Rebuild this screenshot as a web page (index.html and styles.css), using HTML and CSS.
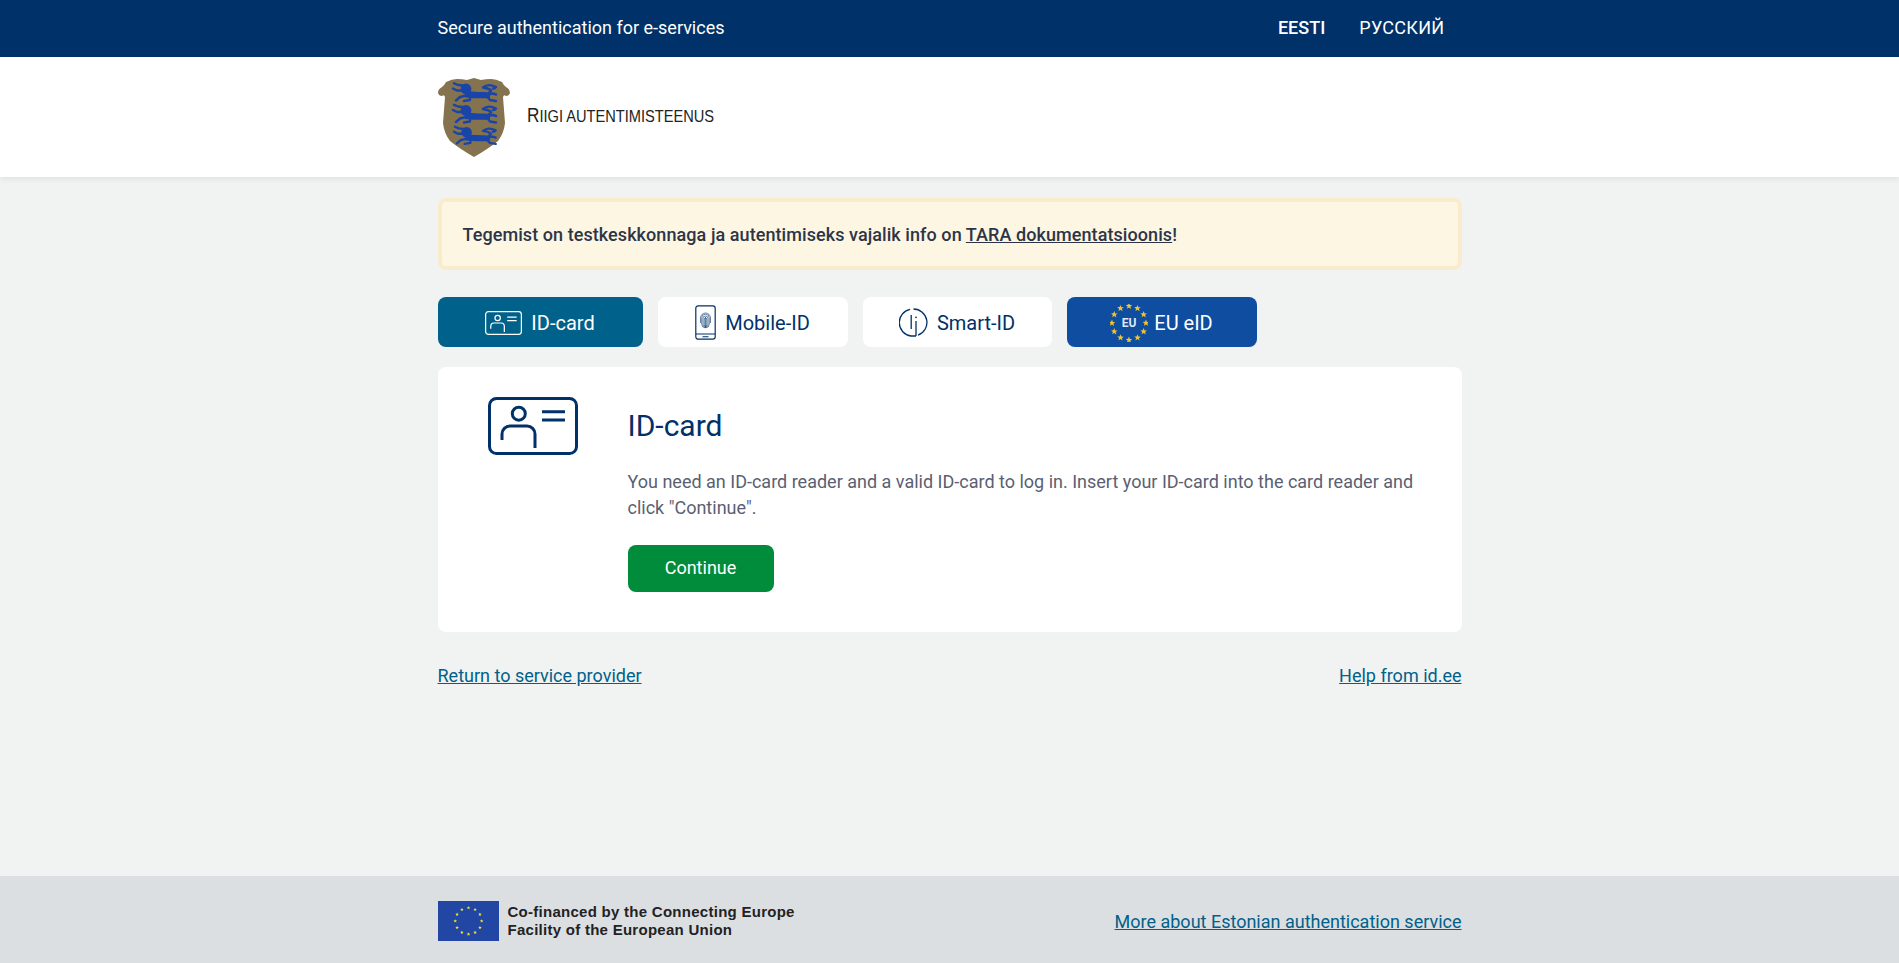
FILE: index.html
```html
<!DOCTYPE html>
<html lang="en">
<head>
  <meta charset="utf-8" />
  <title>Secure authentication for e-services</title>
  <link rel="stylesheet" href="styles.css">
</head>
<body>

<svg class="defs" width="0" height="0">
  <defs>
    <g id="lion" fill="none" stroke="#1a45a8" stroke-linecap="round" stroke-linejoin="round">
      <circle cx="14" cy="6.5" r="5.4" fill="#1a45a8" stroke="none"/>
      <path d="M13 8C22 10 30 9 38 10L38 15.5C28 16 22 16 13 15Z" fill="#1a45a8" stroke="none"/>
      <path stroke-width="2.4" d="M11 3L6 2.5 2 .8M10 8L5 8 1 6M14 13L8 14.5 4 18"/>
      <path stroke-width="2.4" d="M18 14L18 17.5 12 18.5"/>
      <path stroke-width="2.4" d="M37 10C42 8 37 6 31 5 35 1.5 40 2.5 44 4.5 43 6 42 6 41 6"/>
      <path stroke-width="2.4" d="M35 12L41 11 44 12M35 14L38 17.5 44 18.5"/>
    </g>
    <path id="star" d="M0-3.4l.9 2.3 2.4.1-1.9 1.5.7 2.4L0 1.4l-2.1 1.4.7-2.4-1.9-1.5 2.4-.1z"/>
    <g id="card-icon">
      <rect x="1.5" y="1.5" width="87" height="55" rx="7"/>
      <circle cx="30.8" cy="16.7" r="6.5"/>
      <path d="M14 43v-6a8 8 0 0 1 8-8h17a8 8 0 0 1 8 8v14"/>
      <path d="M54 14.7h23M54 23h23"/>
    </g>
  </defs>
</svg>

<div class="topbar">
  <div class="wrap topbar-row">
    <span>Secure authentication for e-services</span>
    <nav class="langs">
      <a href="#" class="lang active">EESTI</a>
      <a href="#" class="lang">РУССКИЙ</a>
    </nav>
  </div>
</div>

<header class="masthead">
  <div class="wrap masthead-row">
    <svg class="crest" viewBox="0 0 72 80">
      <path fill="#85724f" d="M8 5Q14 2 19 2 24 2 29 3L36 1 43 3Q48 2 53 2 58 2 64 5 66 9 68 10 72 12 72 16 71 19 68 19 66 17 65 20L67 46Q66 56 60 64 50 72 36 80 22 72 12 64 6 56 5 46L7 20Q6 17 4 19 1 19 0 16 0 12 4 10 6 9 8 5Z"/>
      <use href="#lion" transform="translate(14 5.5)"/>
      <use href="#lion" transform="translate(14 27)"/>
      <use href="#lion" transform="translate(15 49) scale(.97)"/>
    </svg>
    <span class="sitename">Riigi autentimisteenus</span>
  </div>
</header>

<main class="wrap">
  <div class="notice">
    <span>Tegemist on testkeskkonnaga ja autentimiseks vajalik info on <a href="#">TARA dokumentatsioonis</a>!</span>
  </div>

  <ul class="tabs">
    <li class="tab tab-idcard current">
      <svg class="tab-icon" width="37" height="24" viewBox="0 0 90 58" fill="none" stroke="#fff" stroke-width="3"><use href="#card-icon"/></svg>
      ID-card
    </li>
    <li class="tab tab-mobile">
      <svg class="tab-icon" width="21" height="35" viewBox="0 0 21 35" fill="none" stroke="#003168" stroke-width="1.1">
        <rect x=".8" y=".8" width="19.4" height="33.4" rx="2.4" stroke-width="1.2"/>
        <path d="M1 29h19M7.5 31.7h6"/>
        <g stroke-width=".6">
          <path d="M5.5 13a5 5 0 0 1 10 0v5M5.5 13v5"/>
          <path d="M6.7 13a3.8 3.8 0 0 1 7.6 0v6a3.8 3.8 0 0 1-7.6 0z"/>
          <path d="M8 13.5a2.5 2.5 0 0 1 5 0v6a2.5 2.5 0 0 1-5 0z"/>
          <path d="M9.3 14a1.2 1.2 0 0 1 2.4 0v6a1.2 1.2 0 0 1-2.4 0z"/>
          <path d="M10.5 12v11"/>
        </g>
      </svg>
      Mobile-ID
    </li>
    <li class="tab tab-smart">
      <svg class="tab-icon" width="29" height="29" viewBox="0 0 29 29" fill="none" stroke="#003168" stroke-width="1.3">
        <path d="M11 1.4A13.5 13.5 0 0 0 12 28H17"/>
        <path d="M14.5 1A13.5 13.5 0 0 1 19 27.2"/>
        <path d="M12.2 7v14M17 13v15"/>
        <circle cx="17" cy="9.3" r=".9" fill="#003168" stroke="none"/>
      </svg>
      Smart-ID
    </li>
    <li class="tab tab-eu">
      <svg class="tab-icon" width="38" height="38" viewBox="-19 -19 38 38" fill="#f4c430">
        <use href="#star" x="0" y="-17"/>
        <use href="#star" x="8.5" y="-14.7"/>
        <use href="#star" x="14.7" y="-8.5"/>
        <use href="#star" x="17" y="0"/>
        <use href="#star" x="14.7" y="8.5"/>
        <use href="#star" x="8.5" y="14.7"/>
        <use href="#star" x="0" y="17"/>
        <use href="#star" x="-8.5" y="14.7"/>
        <use href="#star" x="-14.7" y="8.5"/>
        <use href="#star" x="-17" y="0"/>
        <use href="#star" x="-14.7" y="-8.5"/>
        <use href="#star" x="-8.5" y="-14.7"/>
        <text class="eu-mark" x="0" y="4" text-anchor="middle">EU</text>
      </svg>
      EU eID
    </li>
  </ul>

  <section class="panel">
    <svg class="panel-icon" width="90" height="58" viewBox="0 0 90 58" fill="none" stroke="#003168" stroke-width="3"><use href="#card-icon"/></svg>
    <div class="panel-body">
      <h1>ID-card</h1>
      <p>You need an ID-card reader and a valid ID-card to log in. Insert your ID-card into the card reader and click "Continue".</p>
      <a href="#" class="btn">Continue</a>
    </div>
  </section>

  <div class="links">
    <a href="#">Return to service provider</a>
    <a href="#">Help from id.ee</a>
  </div>
</main>

<footer class="footer">
  <div class="wrap footer-row">
    <div class="funding">
      <svg class="eu-flag" width="61" height="40" viewBox="-30.5 -20 61 40">
        <rect x="-30.5" y="-20" width="61" height="40" fill="#2146a4"/>
        <g fill="#f7e62b" transform="scale(.55)">
          <use href="#star" x="0" y="-24"/>
          <use href="#star" x="12" y="-20.8"/>
          <use href="#star" x="20.8" y="-12"/>
          <use href="#star" x="24" y="0"/>
          <use href="#star" x="20.8" y="12"/>
          <use href="#star" x="12" y="20.8"/>
          <use href="#star" x="0" y="24"/>
          <use href="#star" x="-12" y="20.8"/>
          <use href="#star" x="-20.8" y="12"/>
          <use href="#star" x="-24" y="0"/>
          <use href="#star" x="-20.8" y="-12"/>
          <use href="#star" x="-12" y="-20.8"/>
        </g>
      </svg>
      <span class="funding-text">Co-financed by the Connecting Europe<br>Facility of the European Union</span>
    </div>
    <a href="#" class="footer-link">More about Estonian authentication service</a>
  </div>
</footer>

</body>
</html>
```

FILE: styles.css
```css
html, body {
  height: 100%;
}

body {
  margin: 0;
  display: flex;
  flex-direction: column;
  background-color: #f1f3f2;
  color: #2c3547;
  font-family: Roboto, "Liberation Sans", sans-serif;
  font-size: 18px;
}

a {
  color: #00618a;
}

.defs {
  position: absolute;
}

.wrap {
  width: 1024px;
  margin: 0 auto;
}

.topbar {
  height: 57px;
  background-color: #003168;
  color: #fff;
}

.topbar-row {
  height: 100%;
  box-sizing: border-box;
  padding-bottom: 2px;
  display: flex;
  align-items: center;
  justify-content: space-between;
}

.langs {
  display: flex;
  gap: 34px;
  margin-right: 17px;
}

.lang {
  color: #fff;
  text-decoration: none;
  letter-spacing: 0.3px;
}

.lang.active {
  font-weight: 500;
  letter-spacing: 0;
}

.masthead {
  height: 120px;
  background-color: #fff;
  box-shadow: 0 2px 6px rgba(0, 0, 0, 0.08);
}

.masthead-row {
  height: 100%;
  display: flex;
  align-items: center;
  gap: 17px;
}

.crest {
  width: 72px;
  height: 80px;
}

.sitename {
  display: inline-block;
  margin-bottom: 4px;
  font-family: "Liberation Sans", sans-serif;
  font-size: 17px;
  text-transform: uppercase;
  white-space: nowrap;
  color: #222;
  transform: scaleX(0.86);
  transform-origin: left center;
}

.sitename::first-letter {
  font-size: 20px;
}

.notice {
  margin-top: 21px;
  padding: 0 20px 0 21px;
  height: 72px;
  box-sizing: border-box;
  display: flex;
  align-items: center;
  border: 4px solid #faebcd;
  border-radius: 8px;
  background-color: #fdf6e3;
  font-weight: 500;
  letter-spacing: 0.07px;
}

.notice a {
  color: inherit;
}

.tabs {
  list-style: none;
  display: flex;
  gap: 15px;
  margin: 27px 0 20px;
  padding: 0;
}

.tab {
  width: 190px;
  height: 50px;
  box-sizing: border-box;
  padding-top: 1px;
  display: flex;
  align-items: center;
  justify-content: center;
  gap: 9px;
  border-radius: 8px;
  background-color: #fff;
  color: #003168;
  font-size: 20px;
}

.tab-idcard {
  width: 205px;
}

.tab-smart {
  width: 189px;
}

.tab.current {
  background-color: #00618a;
  color: #fff;
}

.tab-eu {
  background-color: #0f4da1;
  color: #fff;
  gap: 6px;
}

.eu-mark {
  font-family: Roboto, sans-serif;
  font-size: 12px;
  font-weight: 700;
  fill: #dfe7f3;
}

.panel {
  height: 265px;
  display: flex;
  border-radius: 8px;
  background-color: #fff;
}

.panel-icon {
  margin: 30px 0 0 50px;
}

.panel-body {
  margin-left: 50px;
  width: 800px;
}

h1 {
  margin: 41px 0 0;
  font-size: 30px;
  font-weight: 400;
  line-height: 36px;
  color: #003168;
}

.panel-body p {
  margin: 25px 0 0;
  line-height: 26px;
  color: #5a5f73;
}

.btn {
  display: block;
  width: 146px;
  height: 47px;
  margin-top: 24px;
  border-radius: 8px;
  background-color: #008c3a;
  color: #fff;
  line-height: 46px;
  text-align: center;
  text-decoration: none;
}

.links {
  display: flex;
  justify-content: space-between;
  margin-top: 33px;
}

.footer {
  margin-top: auto;
  height: 87px;
  background-color: #dcdfe2;
}

.footer-row {
  height: 100%;
  box-sizing: border-box;
  padding-top: 2px;
  display: flex;
  align-items: center;
  justify-content: space-between;
}

.footer-link {
  margin-top: 2px;
}

.funding {
  display: flex;
  align-items: center;
  gap: 9px;
}

.funding-text {
  font-family: "Liberation Sans", sans-serif;
  font-size: 15px;
  font-weight: 700;
  line-height: 18px;
  letter-spacing: 0.27px;
  color: #222;
}
```
